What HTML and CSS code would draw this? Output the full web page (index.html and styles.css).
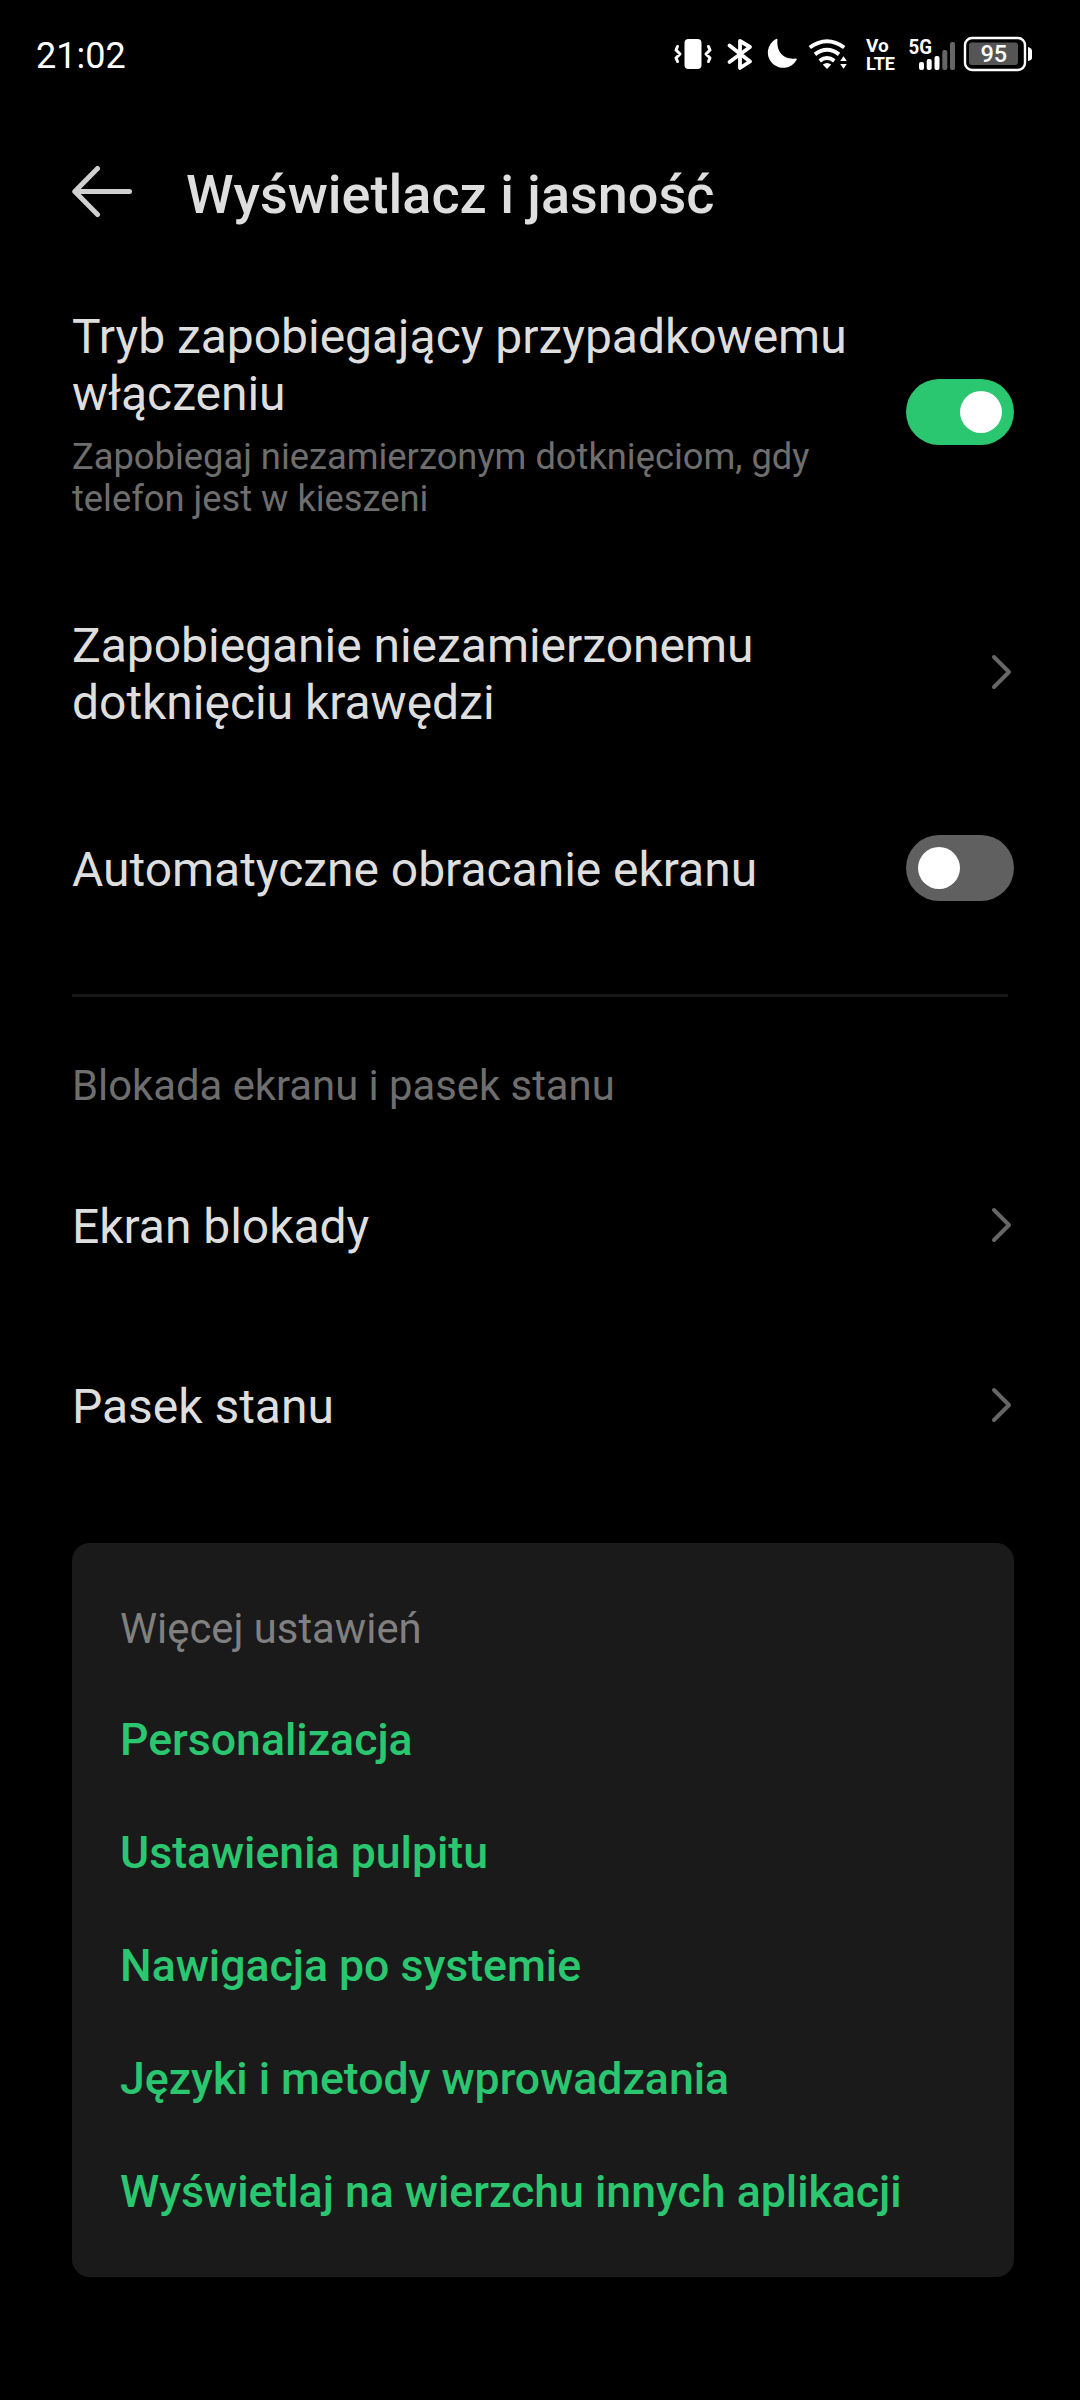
FILE: index.html
```html
<!DOCTYPE html>
<html lang="pl">
<head>
<meta charset="utf-8">
<title>Wyświetlacz i jasność</title>
<link rel="stylesheet" href="styles.css">
</head>
<body>
<header class="status">
  <span class="clock">21:02</span>
  <svg class="status-icons" width="370" height="50" viewBox="670 30 370 50">
    <!-- vibrate -->
    <rect x="684.5" y="39" width="17" height="30" rx="4"/>
    <path class="line" d="M677.500 46.500l-1.500 3.500 4 4-4 4 1.500 3.500M708.500 46.500l1.500 3.500-4 4 4 4-1.500 3.500" stroke-width="3"/>
    <!-- bluetooth -->
    <path class="line" d="M729.500 45.500L750 61.500l-10 6.500V41l10 6-20.500 15" stroke-width="3.800"/>
    <!-- do not disturb -->
    <path d="M777.500 39.500a1 1 0 0 0-1.500-.5A15.300 15.300 0 1 0 796.500 60q.8-1.800-1.200-1.500c-12 1.500-19.300-7-17.800-19z"/>
    <!-- wifi -->
    <path class="wifi" d="M809.800 47.500q17.200-12.500 34.400 0M815 54.300q12-9 24 0M819.700 60.800q7.300-5.600 14.600 0"/>
    <path d="M822.800 64.500q4.200-3 8.400 0l-4.200 4.500z"/>
    <path d="M840.200 61l3.300-4.800 3.300 4.800zM840.200 64l3.300 4.800 3.300-4.800z"/>
    <text x="866" y="52" font-size="19">Vo</text>
    <text x="866" y="70" font-size="19" textLength="29" lengthAdjust="spacingAndGlyphs">LTE</text>
    <text x="908.500" y="53.500" font-size="20.500" textLength="23.500" lengthAdjust="spacingAndGlyphs">5G</text>
    <!-- signal bars -->
    <rect x="919" y="62" width="5" height="8" rx="2"/>
    <rect x="926.700" y="59" width="5" height="11" rx="2"/>
    <rect x="934.500" y="56" width="5" height="14" rx="2"/>
    <rect class="dim" x="942.300" y="50" width="5" height="20" rx="2"/>
    <rect class="dim" x="950" y="42" width="5" height="28" rx="2"/>
    <!-- battery -->
    <rect class="line" x="965" y="38" width="60" height="32" rx="7" stroke-width="2.400"/>
    <rect class="charge" x="969" y="42.500" width="49" height="22.500" rx="3"/>
    <path d="M1028 47q4 1 4 4v7q0 2-4 3z"/>
    <text x="980.500" y="62" font-size="23.500" font-weight="500">95</text>
  </svg>
</header>
<div class="appbar">
  <svg class="back" width="62" height="52" viewBox="0 0 62 52"><path d="M25.500 2.500L2.800 25.500l22.700 23M2.800 25.500h54.700"/></svg>
  <h1>Wyświetlacz i jasność</h1>
</div>
<main>
  <section class="row pocket">
    <div class="texts">
      <p class="label">Tryb zapobiegający przypadkowemu<br>włączeniu</p>
      <p class="hint">Zapobiegaj niezamierzonym dotknięciom, gdy<br>telefon jest w kieszeni</p>
    </div>
    <span class="switch on"></span>
  </section>
  <section class="row edge">
    <p class="label">Zapobieganie niezamierzonemu<br>dotknięciu krawędzi</p>
    <svg class="chev" width="24" height="36" viewBox="0 0 24 36"><path d="M4 3l15 15L4 33"/></svg>
  </section>
  <section class="row rotate">
    <p class="label">Automatyczne obracanie ekranu</p>
    <span class="switch"></span>
  </section>
  <hr>
  <h2 class="group">Blokada ekranu i pasek stanu</h2>
  <section class="row single">
    <p class="label">Ekran blokady</p>
    <svg class="chev" width="24" height="36" viewBox="0 0 24 36"><path d="M4 3l15 15L4 33"/></svg>
  </section>
  <section class="row single">
    <p class="label">Pasek stanu</p>
    <svg class="chev" width="24" height="36" viewBox="0 0 24 36"><path d="M4 3l15 15L4 33"/></svg>
  </section>
  <section class="card">
    <h2>Więcej ustawień</h2>
    <a>Personalizacja</a>
    <a>Ustawienia pulpitu</a>
    <a>Nawigacja po systemie</a>
    <a>Języki i metody wprowadzania</a>
    <a>Wyświetlaj na wierzchu innych aplikacji</a>
  </section>
</main>
</body>
</html>
```
FILE: styles.css
```css
*{box-sizing:border-box}
body{margin:0;background:#000;color:#dedede;font-family:Roboto,sans-serif;height:2400px;overflow:hidden}
h1,h2,p{margin:0;font-weight:400}
.status{height:110px;display:flex;justify-content:space-between;padding:30px 40px 0 36px;color:#fff}
.clock{font-size:36px;line-height:52px}
.status-icons{fill:#fff;font-weight:700}
.status-icons .line{fill:none;stroke:#fff;stroke-linecap:round;stroke-linejoin:round}
.status-icons .wifi{fill:none;stroke:#fff;stroke-width:4}
.status-icons .dim{fill:#666}
.status-icons .charge{fill:#555}
.appbar{height:170px;display:flex;align-items:center;padding:0 72px 2px;gap:52px}
.back{margin-bottom:5px;fill:none;stroke:#d0d0d0;stroke-width:5;stroke-linecap:round;stroke-linejoin:round}
h1{font-size:54px;font-weight:500}
main{padding:0 66px 0 72px}
.row{display:flex;align-items:center;justify-content:space-between}
.label{font-size:48px;line-height:57px;letter-spacing:-.03px;white-space:nowrap}
.hint{font-size:36.300px;line-height:42px;color:#6e6e6e;white-space:nowrap;margin-top:14px}
.texts{padding-top:4px}
.pocket{height:264px}
.edge{height:260px}
.edge .chev{margin-bottom:4px}
.rotate{height:130px}
.rotate .switch{margin-bottom:2px}
.switch{width:108px;height:66px;border-radius:33px;background:#606060;padding:12px}
.switch::before{content:"";display:block;width:42px;height:42px;border-radius:50%;background:#fff}
.on{background:#2ac670}
.on::before{margin-left:42px}
.chev{fill:none;stroke:#666;stroke-width:4;stroke-linecap:round;stroke-linejoin:round}
hr{margin:60px 6px 0 0;border:0;height:3px;background:#171717}
.group{font-size:41.800px;line-height:50px;color:#6e6e6e;margin:64px 0 25px}
.single{height:180px}
.single .chev{margin-bottom:2px}
.card{background:#1a1a1a;border-radius:18px;height:734px;margin-top:47px;padding:61px 48px 0}
.card h2{font-size:41.800px;line-height:50px;color:#808080;margin-bottom:30px}
.card a{display:block;font-size:44.600px;font-weight:500;line-height:113px;color:#2ac670;white-space:nowrap}
```
